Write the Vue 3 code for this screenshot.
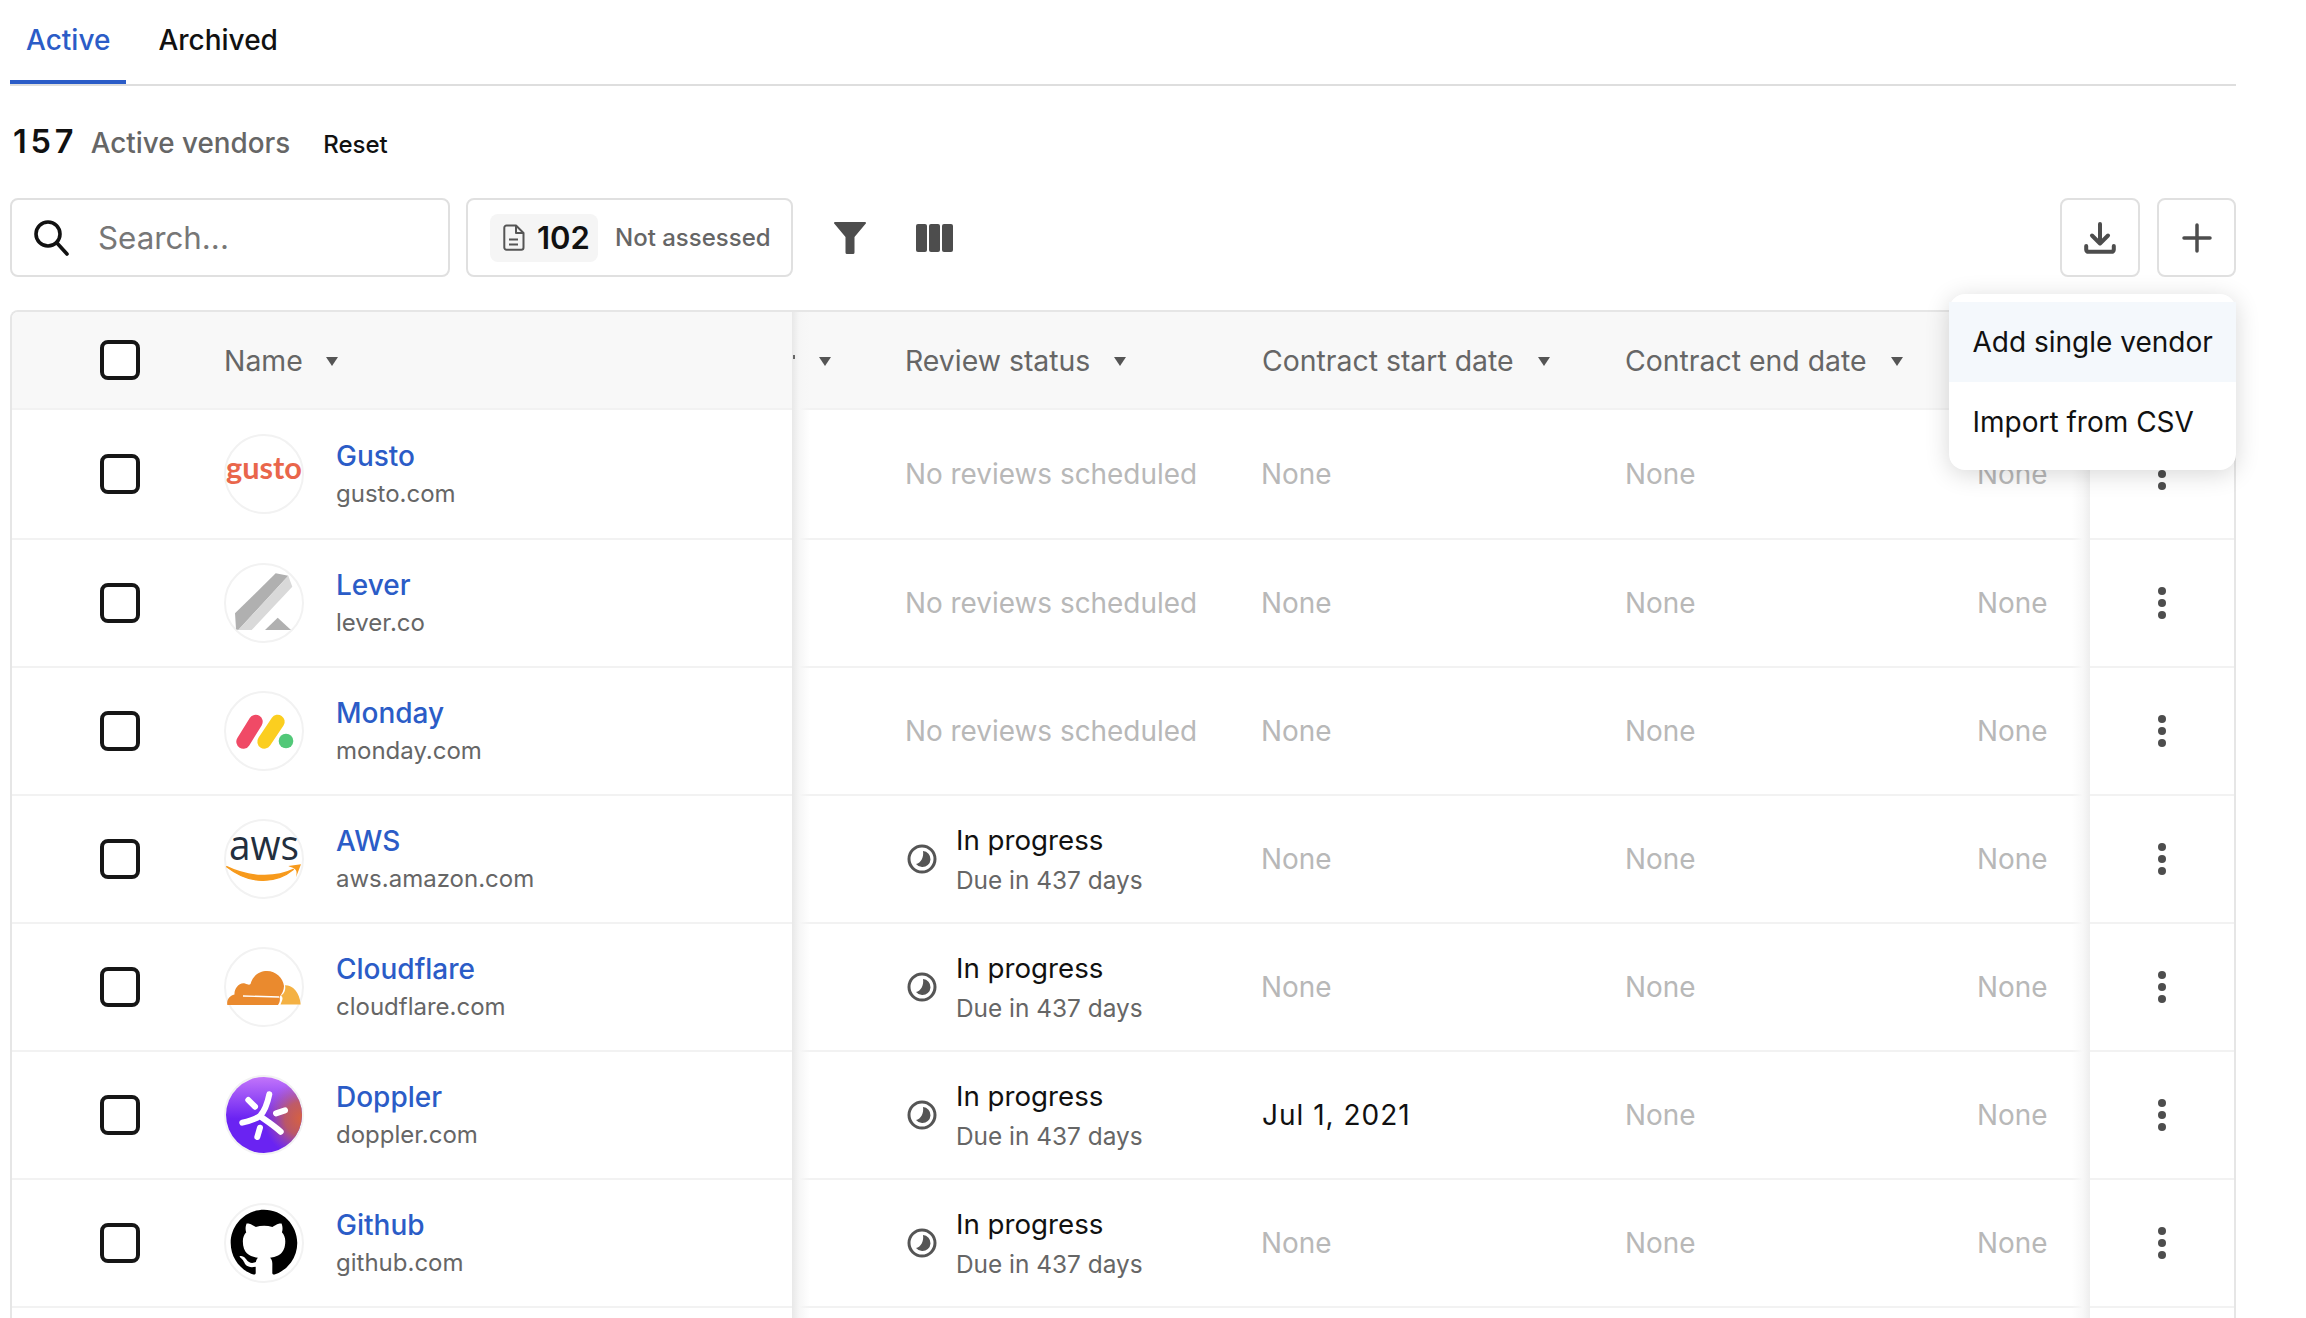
<script setup>
const vendors = [
  { logo: 'gusto', name: 'Gusto', domain: 'gusto.com', status: null, start: 'None' },
  { logo: 'lever', name: 'Lever', domain: 'lever.co', status: null, start: 'None' },
  { logo: 'monday', name: 'Monday', domain: 'monday.com', status: null, start: 'None' },
  { logo: 'aws', name: 'AWS', domain: 'aws.amazon.com', status: 'In progress', start: 'None' },
  { logo: 'cloudflare', name: 'Cloudflare', domain: 'cloudflare.com', status: 'In progress', start: 'None' },
  { logo: 'doppler', name: 'Doppler', domain: 'doppler.com', status: 'In progress', start: 'Jul 1, 2021' },
  { logo: 'github', name: 'Github', domain: 'github.com', status: 'In progress', start: 'None' }
]
</script>

<template>
  <div class="page">
    <nav class="tabs">
      <a class="tab active">Active</a>
      <a class="tab">Archived</a>
    </nav>

    <div class="summary">
      <span class="count">157</span>
      <span class="count-label">Active vendors</span>
      <span class="reset">Reset</span>
    </div>

    <div class="toolbar">
      <label class="search">
        <svg class="search-icon" viewBox="0 0 36 36" fill="none" stroke="#111" stroke-width="3.6" stroke-linecap="round">
          <circle cx="14" cy="14" r="12" />
          <path d="M22.5 22.5 33 34" />
        </svg>
        <span class="search-text">Search...</span>
      </label>
      <div class="assess">
        <span class="chip">
          <svg class="doc" viewBox="0 0 22 27" fill="none" stroke="#555" stroke-width="2" stroke-linejoin="round">
            <path d="M3.5 1.5h9.5l7.5 7.5v14.5a2.2 2.2 0 0 1-2.2 2.2H3.5a2.2 2.2 0 0 1-2.2-2.2V3.7a2.2 2.2 0 0 1 2.2-2.2z" />
            <path d="M13 1.5V9h7.5M6 15.5h9M6 20.5h9" />
          </svg>
          <b>102</b>
        </span>
        <span class="assess-label">Not assessed</span>
      </div>
      <svg class="filter" viewBox="0 0 32 32"><path d="M1 0h30a1 1 0 0 1 .8 1.6L20.5 15v15.500a1.500 1.500 0 0 1-1.500 1.500h-6a1.500 1.500 0 0 1-1.500-1.500V15L.2 1.600A1 1 0 0 1 1 0z" fill="#4d4d4d" /></svg>
      <svg class="cols" viewBox="0 0 37 28" fill="#4d4d4d">
        <rect x="0" y="0" width="11" height="28" rx="2" />
        <rect x="13" y="0" width="11" height="28" rx="2" />
        <rect x="26" y="0" width="11" height="28" rx="2" />
      </svg>
      <div class="spacer"></div>
      <button class="icon-btn">
        <svg viewBox="0 0 32 32" width="32" height="32" fill="none" stroke="#4d4d4d" stroke-width="4" stroke-linecap="round" stroke-linejoin="round">
          <path d="M16 2V21M8 13.500 16 21.500l8-8" />
          <path d="M2.200 24v3.500a2.500 2.500 0 0 0 2.500 2.300h22.600a2.500 2.500 0 0 0 2.500-2.300V24" />
        </svg>
      </button>
      <button class="icon-btn plus-btn">
        <svg viewBox="0 0 30 30" width="30" height="30" fill="none" stroke="#4d4d4d" stroke-width="3.500" stroke-linecap="round">
          <path d="M15 2v26M2 15h26" />
        </svg>
      </button>
      <div class="menu">
        <div class="menu-item hover">Add single vendor</div>
        <div class="menu-item">Import from CSV</div>
      </div>
    </div>

    <div class="table">
      <div class="row head">
        <div class="cell sticky-left">
          <span class="box"></span>
          <span class="th name-th">Name<i class="caret"></i></span>
        </div>
        <div class="cell hidden-col"><span class="tick"></span><i class="caret"></i></div>
        <div class="cell review"><span class="th">Review status<i class="caret"></i></span></div>
        <div class="cell start"><span class="th">Contract start date<i class="caret"></i></span></div>
        <div class="cell end"><span class="th">Contract end date<i class="caret"></i></span></div>
        <div class="cell last"></div>
        <div class="cell sticky-right"></div>
      </div>

      <div v-for="v in vendors" :key="v.name" class="row">
        <div class="cell sticky-left">
          <span class="box"></span>
          <span class="avatar">
            <svg v-if="v.logo === 'gusto'" viewBox="0 0 80 80">
              <text class="gusto-word" x="2" y="45" textLength="76" lengthAdjust="spacingAndGlyphs">gusto</text>
            </svg>
            <svg v-else-if="v.logo === 'lever'" viewBox="0 0 80 80">
              <path d="M51.700 10.300 64.300 12.700 14.300 67 12 66.300 11 50.300z" fill="#b0b0b0" />
              <path d="M64.300 12.700 68.300 23.700 27.700 67H14.300z" fill="#d9d9d9" />
              <path d="M53.700 54.700 67 67H41z" fill="#b0b0b0" />
            </svg>
            <svg v-else-if="v.logo === 'monday'" viewBox="0 0 80 80">
              <path d="M19.300 50.700 31.700 30.700" stroke="#f04a66" stroke-width="14" stroke-linecap="round" />
              <path d="M40.300 50.700 53.700 30.700" stroke="#fbce1f" stroke-width="14" stroke-linecap="round" />
              <circle cx="62" cy="50" r="7.300" fill="#52c878" />
            </svg>
            <svg v-else-if="v.logo === 'aws'" viewBox="0 0 80 80">
              <text class="aws-word" x="5" y="41" textLength="70" lengthAdjust="spacingAndGlyphs">aws</text>
              <path d="M2.700 47.700C26 66 52 65 69.300 50.500 52 59 26 59 2.700 47.700z" fill="#f79a1c" stroke="#f79a1c" stroke-width="1.400" stroke-linejoin="round" />
              <path d="M64.300 47 77 45.300 72 58.300C73 54 73 51 70 49.500 68.500 48.500 66.500 48 64.300 47z" fill="#f79a1c" />
            </svg>
            <svg v-else-if="v.logo === 'cloudflare'" viewBox="0 0 80 80">
              <path d="M3.300 58C2.500 53 5 49 10.500 47.500 10 42 15 35 21 36.500 24 37.800 25.500 38 26.500 37 29 28 36 24 43 24 52 24 59 31 60 39 60 43 58 47 55.500 50 56.500 53 55.500 56 54 58z" fill="#ea8a2e" />
              <path d="M19 49 55 50" stroke="#fff" stroke-width="1.400" />
              <path d="M61 38.300C69 38.500 75.500 45 76.700 57.500H56.500L57.500 55C59 52 59 50 57 48.800 60.500 46.500 62 42.500 61 38.300z" fill="#f4b143" />
            </svg>
            <svg v-else-if="v.logo === 'doppler'" viewBox="0 0 80 80">
              <defs>
                <linearGradient id="dop-a" x1="0.5" y1="0" x2="0.5" y2="0.55">
                  <stop offset="0" stop-color="#c274fa" />
                  <stop offset="1" stop-color="#6a23f2" />
                </linearGradient>
                <radialGradient id="dop-b" cx="1" cy="0.55" r="0.5">
                  <stop offset="0" stop-color="#d8623f" />
                  <stop offset="0.45" stop-color="#c8604f" stop-opacity="0.85" />
                  <stop offset="1" stop-color="#b060a0" stop-opacity="0" />
                </radialGradient>
              </defs>
              <circle cx="40" cy="40" r="38" fill="url(#dop-a)" />
              <circle cx="40" cy="40" r="38" fill="url(#dop-b)" />
              <g stroke="#fff" stroke-width="6" stroke-linecap="round" fill="none">
                <path d="M45.300 19.300C43.500 28 41.500 35 36 41 31 44.500 24 46.300 18.300 47.700M36.500 41.500C43 46 50.500 51 56.700 56.700" />
                <path d="M24.300 25 31 31.700M52 38.300 61 35.300M36 52.700 33.300 62" />
              </g>
            </svg>
            <svg v-else-if="v.logo === 'github'" viewBox="0 0 80 80">
              <g transform="translate(6.700 6.700) scale(4.160)">
                <circle cx="8" cy="8" r="7.800" fill="#fff" />
                <path d="M8 0C3.580 0 0 3.580 0 8c0 3.540 2.290 6.530 5.470 7.590.4.070.55-.17.55-.38 0-.19-.01-.82-.01-1.490-2.010.37-2.530-.49-2.690-.94-.09-.23-.48-.94-.82-1.130-.28-.15-.68-.52-.01-.53.63-.01 1.080.58 1.230.82.72 1.210 1.870.87 2.330.66.070-.52.28-.87.51-1.070-1.780-.2-3.640-.89-3.640-3.950 0-.87.31-1.590.82-2.150-.08-.2-.36-1.020.08-2.120 0 0 .67-.21 2.200.82.64-.18 1.320-.27 2-.27.68 0 1.360.09 2 .27 1.530-1.040 2.200-.82 2.200-.82.44 1.100.16 1.920.08 2.120.51.56.82 1.270.82 2.150 0 3.070-1.870 3.750-3.650 3.950.29.25.54.73.54 1.480 0 1.070-.01 1.930-.01 2.200 0 .21.15.46.55.38A8.013 8.013 0 0 0 16 8c0-4.420-3.580-8-8-8z" fill="#000" />
              </g>
            </svg>
          </span>
          <span class="vendor">
            <span class="vendor-name">{{ v.name }}</span>
            <span class="vendor-domain">{{ v.domain }}</span>
          </span>
        </div>
        <div class="cell hidden-col"></div>
        <div class="cell review">
          <template v-if="v.status">
            <svg class="progress" viewBox="0 0 30 30">
              <circle cx="15" cy="15" r="13" fill="none" stroke="#555" stroke-width="3" />
              <path d="M16 7A8 8 0 0 1 15 23 8 8 0 0 1 9 20C14 19 17 13 16 7z" fill="#555" />
            </svg>
            <span class="status">
              <span class="status-title">{{ v.status }}</span>
              <span class="status-due">Due in 437 days</span>
            </span>
          </template>
          <span v-else class="none">No reviews scheduled</span>
        </div>
        <div class="cell start">
          <span :class="v.start === 'None' ? 'none' : 'date'">{{ v.start }}</span>
        </div>
        <div class="cell end"><span class="none">None</span></div>
        <div class="cell last"><span class="none">None</span></div>
        <div class="cell sticky-right">
          <svg class="dots" viewBox="0 0 8 32" fill="#4d4d4d">
            <circle cx="4" cy="4" r="4" />
            <circle cx="4" cy="16" r="4" />
            <circle cx="4" cy="28" r="4" />
          </svg>
        </div>
      </div>

      <div class="row">
        <div class="cell sticky-left"></div>
        <div class="cell hidden-col"></div>
        <div class="cell review"></div>
        <div class="cell start"></div>
        <div class="cell end"></div>
        <div class="cell last"></div>
        <div class="cell sticky-right"></div>
      </div>
    </div>
  </div>
</template>

<style>
html, body { margin: 0; background: #fff; }
</style>

<style scoped>
.page {
  width: 2306px;
  height: 1318px;
  overflow: hidden;
  box-sizing: border-box;
  padding-left: 10px;
  font-family: Inter, "Liberation Sans", sans-serif;
  color: #111;
  background: #fff;
}
.tabs {
  width: 2226px;
  height: 84px;
  display: flex;
  border-bottom: 2px solid #dedede;
}
.tab {
  height: 80px;
  padding: 0 16px;
  margin-right: 16px;
  display: flex;
  align-items: center;
  font-size: 28px;
  font-weight: 500;
}
.tab.active {
  color: #2b5cc7;
  border-bottom: 4px solid #2b5cc7;
}
.summary {
  height: 112px;
  padding-left: 3px;
  box-sizing: border-box;
  padding-top: 36px;
  display: flex;
  align-items: baseline;
}
.count { font-size: 32.500px; font-weight: 600; letter-spacing: 3.800px; }
.count-label { font-size: 27.800px; font-weight: 500; color: #666; margin-left: 13.500px; }
.reset { font-size: 24px; font-weight: 500; margin-left: 33px; }
.toolbar {
  position: relative;
  width: 2226px;
  height: 79px;
  display: flex;
  align-items: center;
}
.search, .assess, .icon-btn {
  box-sizing: border-box;
  height: 79px;
  border: 2px solid #e0e0e0;
  border-radius: 8px;
  background: #fff;
}
.search {
  width: 440px;
  display: flex;
  align-items: center;
  padding-left: 22px;
}
.search-icon { width: 36px; height: 36px; }
.search-text { font-size: 31.300px; color: #777; margin-left: 28px; }
.assess {
  width: 327px;
  margin-left: 16px;
  display: flex;
  align-items: center;
  padding-left: 22px;
}
.chip {
  width: 108px;
  height: 48px;
  box-sizing: border-box;
  padding-left: 13px;
  display: flex;
  align-items: center;
  background: #f5f5f5;
  border-radius: 8px;
}
.chip b { font-size: 31px; font-weight: 600; margin-left: 12px; }
.doc { width: 22px; height: 27px; }
.assess-label { font-size: 24px; font-weight: 500; color: #666; margin-left: 17px; }
.filter { width: 32px; height: 32px; margin-left: 41px; }
.cols { width: 37px; height: 28px; margin-left: 50px; }
.spacer { flex: 1; }
.icon-btn {
  width: 80px;
  padding: 0;
  display: flex;
  align-items: center;
  justify-content: center;
}
.plus-btn { width: 79px; margin-left: 17px; }
.menu {
  position: absolute;
  z-index: 5;
  top: 96px;
  right: 0;
  width: 287px;
  height: 176px;
  box-sizing: border-box;
  padding-top: 8px;
  background: #fff;
  border-radius: 16px;
  box-shadow: 0 4px 24px rgba(0, 0, 0, 0.16);
}
.menu-item {
  height: 80px;
  padding-left: 23.500px;
  display: flex;
  align-items: center;
  font-size: 28px;
}
.menu-item.hover { background: #f4f8fc; }
.table {
  width: 2226px;
  margin-top: 33px;
  box-sizing: border-box;
  border: 2px solid #e6e6e6;
  border-bottom: 0;
  border-radius: 8px 8px 0 0;
  overflow: hidden;
}
.row {
  display: grid;
  grid-template-columns: 780px 113px 357px 363px 352px 113px 144px;
  height: 128px;
  box-sizing: border-box;
  border-bottom: 2px solid #f2f2f2;
}
.row.head {
  height: 98px;
  background: #f8f8f8;
}
.row:nth-child(2) { height: 130px; }
.cell {
  display: flex;
  align-items: center;
  min-width: 0;
  white-space: nowrap;
}
.sticky-left {
  position: relative;
  padding-left: 88px;
}
.sticky-left::after {
  content: "";
  position: absolute;
  top: 0;
  bottom: -2px;
  left: 100%;
  width: 18px;
  background: linear-gradient(to right, #e8e8e8, #f6f6f6 40%, rgba(255, 255, 255, 0));
  z-index: 1;
}
.sticky-right {
  position: relative;
  justify-content: center;
}
.sticky-right::before {
  content: "";
  position: absolute;
  top: 0;
  bottom: -2px;
  right: 100%;
  width: 18px;
  background: linear-gradient(to left, #eeeeee, #f8f8f8 40%, rgba(255, 255, 255, 0));
}
.box {
  width: 40px;
  height: 40px;
  flex: none;
  box-sizing: border-box;
  border: 4px solid #161616;
  border-radius: 8px;
  background: #fff;
}
.th {
  display: flex;
  align-items: center;
  font-size: 28.400px;
  color: #666;
}
.name-th { margin-left: 84px; }
.caret {
  width: 0;
  height: 0;
  margin-top: 2px;
  margin-left: 24px;
  border-left: 6px solid transparent;
  border-right: 6px solid transparent;
  border-top: 9px solid #555;
}
.name-th .caret { margin-left: 23px; }
.hidden-col { position: relative; padding-left: 27px; }
.hidden-col .caret { margin-left: 0; }
.tick {
  position: absolute;
  left: 1px;
  top: 43px;
  width: 2px;
  height: 4px;
  background: #666;
  z-index: 2;
}
.avatar {
  width: 80px;
  height: 80px;
  flex: none;
  margin-left: 84px;
  box-sizing: border-box;
  border: 2px solid #f2f2f2;
  border-radius: 50%;
  position: relative;
}
.avatar svg {
  position: absolute;
  left: -2px;
  top: -2px;
  width: 80px;
  height: 80px;
  overflow: visible;
}
.gusto-word { font-family: Lato, sans-serif; font-weight: 700; font-size: 30px; fill: #e9664b; }
.aws-word { font-family: "Open Sans", sans-serif; font-weight: 500; font-size: 42px; fill: #232f3e; }
.vendor {
  display: flex;
  flex-direction: column;
  margin-left: 32px;
  margin-top: 2px;
}
.vendor-name { font-size: 28px; font-weight: 500; line-height: 37px; color: #2b5cc7; }
.vendor-domain { font-size: 24px; line-height: 37px; color: #666; }
.progress { width: 30px; height: 30px; flex: none; margin-left: 2px; }
.status { display: flex; flex-direction: column; margin-left: 19px; margin-top: 2px; }
.status-title { font-size: 27.700px; line-height: 40px; color: #111; }
.status-due { font-size: 24.400px; line-height: 40px; color: #666; }
.none { font-size: 27.900px; color: #b8b8b8; }
.start .none { margin-left: -1px; }
.date { font-size: 28px; letter-spacing: 1px; color: #111; }
.dots { width: 8px; height: 32px; }
</style>
